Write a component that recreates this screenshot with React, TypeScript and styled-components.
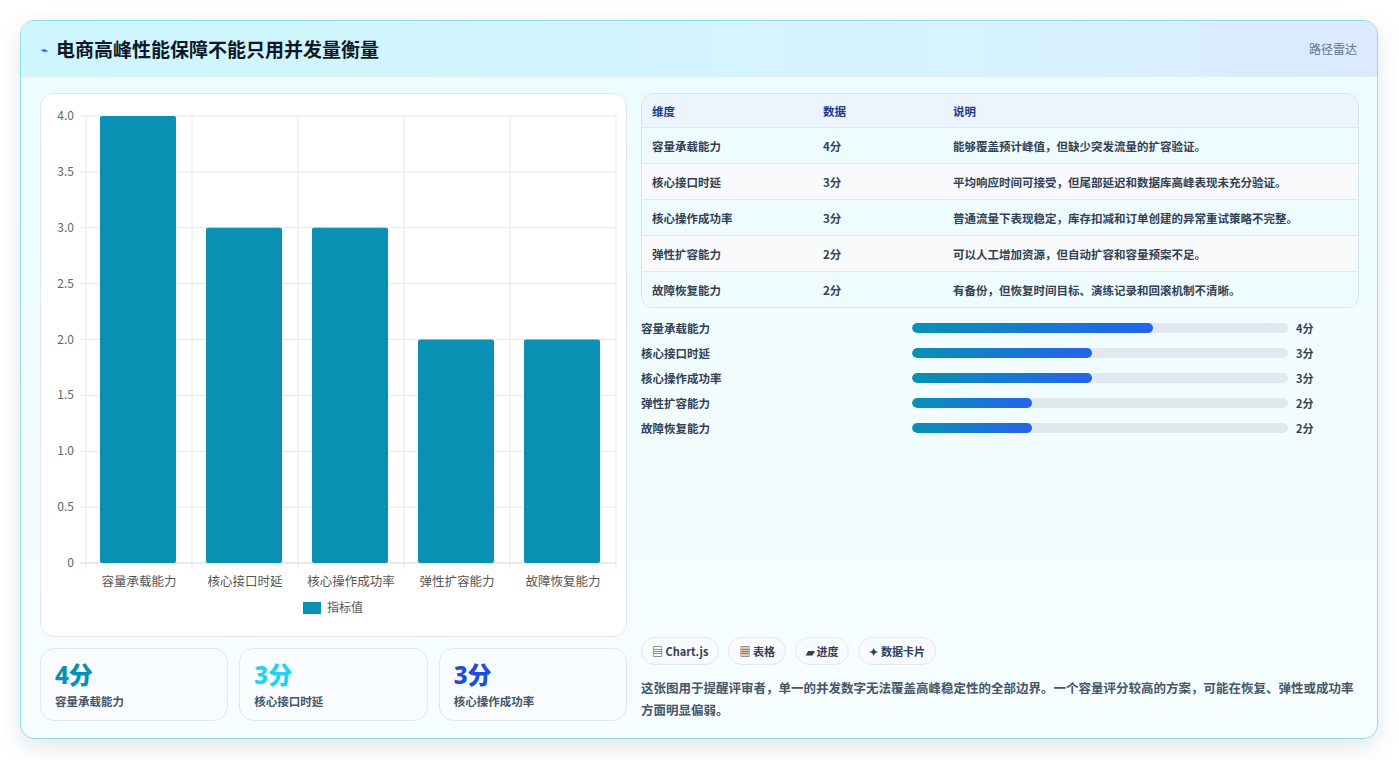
import React from "react";
import styled, { createGlobalStyle } from "styled-components";

const G = createGlobalStyle`
  body { margin: 0; background: #fff; font-family: "Noto Sans CJK SC", "Noto Sans", sans-serif; }
`;

const Page = styled.div`
  width: 1399px; height: 760px; box-sizing: border-box; padding: 20px 21px 21px 20px;
`;
const Card = styled.div`
  height: 100%; box-sizing: border-box; border: 1px solid #8fdce8; border-radius: 14px;
  background: linear-gradient(180deg, #ecfcff 0%, #f6fdff 100%);
  box-shadow: 0 8px 24px rgba(15, 60, 90, 0.12); overflow: hidden; display: flex; flex-direction: column;
`;
const Header = styled.div`
  height: 55px; flex: none; display: flex; align-items: center; justify-content: space-between;
  padding: 0 20px 0 20px; background: linear-gradient(90deg, #cdf6fd 0%, #d6f3ff 70%, #dbe9ff 100%);
  border-bottom: 1px solid #dceff5;
`;
const Title = styled.h1`
  margin: 0; font-size: 19px; font-weight: 700; color: #111827; display: flex; align-items: center; gap: 8px;
`;
const Tag = styled.span` font-size: 12px; color: #64748b; `;
const Body = styled.div`
  flex: 1; display: grid; grid-template-columns: 587px 1fr; gap: 14px; padding: 16px 18px 18px 19px;
`;
const Col = styled.div` display: flex; flex-direction: column; gap: 11px; min-height: 0; `;
const RCol = styled.div` display: flex; flex-direction: column; justify-content: space-between; `;
const ChartBox = styled.div`
  height: 544px; box-sizing: border-box; background: #fff; border: 1px solid #dfe8f0; border-radius: 14px;
`;
const Stats = styled.div` display: grid; grid-template-columns: repeat(3, 1fr); gap: 11px; `;
const Stat = styled.div`
  height: 73px; box-sizing: border-box; border: 1px solid #dbe8f3; border-radius: 14px; background: #f8fcff;
  padding: 10px 14px;
`;
const StatNum = styled.div<{ c: string }>` font-size: 24px; font-weight: 800; color: ${p => p.c}; line-height: 32px; font-family: "Noto Sans", "Noto Sans CJK SC", sans-serif; `;
const StatLbl = styled.div` font-size: 11.5px; color: #475569; font-weight: 600; margin-top: 2px; `;
const Table = styled.div`
  border: 1px solid #d5e3ee; border-radius: 12px; overflow: hidden; background: #f2fcff;
`;
const Row = styled.div<{ head?: boolean; alt?: boolean }>`
  display: grid; grid-template-columns: 171px 130px 1fr; height: ${p => (p.head ? 33 : 35)}px; align-items: center;
  padding-left: 10px; font-size: 11.5px; font-weight: ${p => (p.head ? 700 : 600)};
  color: ${p => (p.head ? "#1e3a8a" : "#334155")};
  background: ${p => (p.head ? "#ecf5fe" : p.alt ? "#f8fafc" : "#effcff")};
  & + & { border-top: 1px solid #dfe7ee; }
`;
const Bars = styled.div` display: flex; flex-direction: column; gap: 9px; margin-top: 12px; `;
const BarRow = styled.div`
  display: grid; grid-template-columns: 271px 376px 1fr; align-items: center; gap: 0; height: 16px;
  font-size: 11.5px; font-weight: 700; color: #334155;
`;
const Track = styled.div` height: 10px; border-radius: 5px; background: #e2e8f0; overflow: hidden; `;
const Fill = styled.div` height: 100%; border-radius: 5px; background: linear-gradient(90deg, #0891b2, #2563eb); `;
const Val = styled.span` padding-left: 8px; font-size: 11px; `;
const Chips = styled.div` display: flex; gap: 9px; `;
const Chip = styled.span`
  height: 28px; box-sizing: border-box; padding: 0 10px; border: 1px solid #e2e8f0; border-radius: 14px;
  background: #f8fafc; font-size: 11px; font-weight: 700; color: #334155; display: flex; align-items: center; gap: 3px;
`;
const Note = styled.p`
  margin: 12px 0 0; font-size: 12.5px; line-height: 22px; color: #475569; font-weight: 600;
`;

const data = [
  ["容量承载能力", 4, "能够覆盖预计峰值，但缺少突发流量的扩容验证。"],
  ["核心接口时延", 3, "平均响应时间可接受，但尾部延迟和数据库高峰表现未充分验证。"],
  ["核心操作成功率", 3, "普通流量下表现稳定，库存扣减和订单创建的异常重试策略不完整。"],
  ["弹性扩容能力", 2, "可以人工增加资源，但自动扩容和容量预案不足。"],
  ["故障恢复能力", 2, "有备份，但恢复时间目标、演练记录和回滚机制不清晰。"],
] as const;

function Chart() {
  const x0 = 45, x1 = 575, top = 22, bot = 469;
  const unit = (bot - top) / 4;
  const cw = (x1 - x0) / 5;
  const ticks = ["0", "0.5", "1.0", "1.5", "2.0", "2.5", "3.0", "3.5", "4.0"];
  return (
    <svg width="585" height="542" style={{ display: "block" }} fontFamily='"Noto Sans CJK SC", sans-serif'>
      {ticks.map((t, i) => {
        const y = bot - (i * unit) / 2;
        return (
          <g key={t}>
            <line x1={x0 - 6} x2={x1} y1={y} y2={y} stroke={i === 0 ? "#cbd5e1" : "#e5e7eb"} />
            <text x={x0 - 12} y={y + 4} fontSize="12" fill="#666" textAnchor="end">{t}</text>
          </g>
        );
      })}
      {[0, 1, 2, 3, 4, 5].map(i => (
        <line key={i} x1={x0 + i * cw} x2={x0 + i * cw} y1={top} y2={bot + 6} stroke="#e5e7eb" />
      ))}
      {data.map((d, i) => {
        const h = (d[1] as number) * unit;
        return (
          <g key={i}>
            <rect x={x0 + i * cw + 14} y={bot - h} width={cw - 30} height={h} rx="2" fill="#0891b2" />
            <text x={x0 + i * cw + cw / 2} y={492} fontSize="12.5" fill="#555" textAnchor="middle">{d[0]}</text>
          </g>
        );
      })}
      <rect x={262} y={508} width={18} height={12} fill="#0891b2" />
      <text x={286} y={518} fontSize="12" fill="#555">指标值</text>
    </svg>
  );
}

export default function App() {
  return (
    <Page>
      <G />
      <Card>
        <Header>
          <Title><span style={{ color: "#2563eb", fontSize: 11 }}>⌁</span>电商高峰性能保障不能只用并发量衡量</Title>
          <Tag>路径雷达</Tag>
        </Header>
        <Body>
          <Col>
            <ChartBox><Chart /></ChartBox>
            <Stats>
              <Stat><StatNum c="#0891b2">4分</StatNum><StatLbl>容量承载能力</StatLbl></Stat>
              <Stat><StatNum c="#22d3ee">3分</StatNum><StatLbl>核心接口时延</StatLbl></Stat>
              <Stat><StatNum c="#1d4ed8">3分</StatNum><StatLbl>核心操作成功率</StatLbl></Stat>
            </Stats>
          </Col>
          <RCol>
            <div>
              <Table>
                <Row head><span>维度</span><span>数据</span><span>说明</span></Row>
                {data.map((d, i) => (
                  <Row key={i} alt={i % 2 === 1}><span>{d[0]}</span><span>{d[1]}分</span><span>{d[2]}</span></Row>
                ))}
              </Table>
              <Bars>
                {data.map((d, i) => (
                  <BarRow key={i}>
                    <span>{d[0]}</span>
                    <Track><Fill style={{ width: `${((d[1] as number) / 6.25) * 100}%` }} /></Track>
                    <Val>{d[1]}分</Val>
                  </BarRow>
                ))}
              </Bars>
            </div>
            <div>
              <Chips>
                <Chip>▤ Chart.js</Chip>
                <Chip>▦ 表格</Chip>
                <Chip>▰ 进度</Chip>
                <Chip>✦ 数据卡片</Chip>
              </Chips>
              <Note>这张图用于提醒评审者，单一的并发数字无法覆盖高峰稳定性的全部边界。一个容量评分较高的方案，可能在恢复、弹性或成功率方面明显偏弱。</Note>
            </div>
          </RCol>
        </Body>
      </Card>
    </Page>
  );
}
